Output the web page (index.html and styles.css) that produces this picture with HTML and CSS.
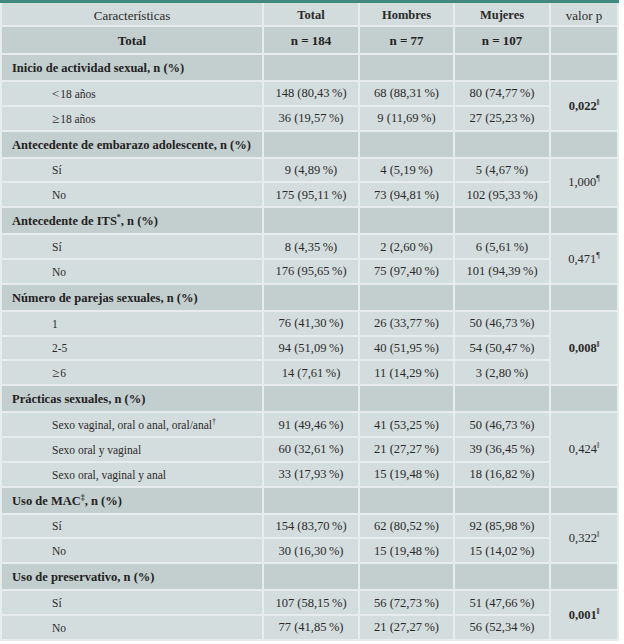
FILE: index.html
```html
<!DOCTYPE html>
<html lang="es">
<head>
<meta charset="utf-8">
<title>Tabla</title>
<link rel="stylesheet" href="styles.css">
</head>
<body>
<table class="tbl">
  <colgroup>
    <col class="c1"><col class="c2"><col class="c3"><col class="c4"><col class="c5">
  </colgroup>
  <tr class="head">
    <td class="first">Características</td>
    <td class="hb">Total</td>
    <td class="hb">Hombres</td>
    <td class="hb">Mujeres</td>
    <td>valor p</td>
  </tr>
  <tr class="sec tot">
    <td class="first ctr">Total</td>
    <td>n = 184</td>
    <td>n = 77</td>
    <td>n = 107</td>
    <td></td>
  </tr>

  <tr class="sec"><td class="first lbl">Inicio de actividad sexual, n (%)</td><td></td><td></td><td></td><td></td></tr>
  <tr class="row"><td class="first sub"><span class="lt">&lt;</span>18 años</td><td>148 (80,43&#8201;%)</td><td>68 (88,31&#8201;%)</td><td>80 (74,77&#8201;%)</td><td rowspan="2" class="pv"><b>0,022<sup>‖</sup></b></td></tr>
  <tr class="row"><td class="first sub"><span class="lt">≥</span>18 años</td><td>36 (19,57&#8201;%)</td><td>9 (11,69&#8201;%)</td><td>27 (25,23&#8201;%)</td></tr>

  <tr class="sec"><td class="first lbl">Antecedente de embarazo adolescente, n (%)</td><td></td><td></td><td></td><td></td></tr>
  <tr class="row"><td class="first sub">Sí</td><td>9 (4,89&#8201;%)</td><td>4 (5,19&#8201;%)</td><td>5 (4,67&#8201;%)</td><td rowspan="2" class="pv">1,000<sup>¶</sup></td></tr>
  <tr class="row"><td class="first sub">No</td><td>175 (95,11&#8201;%)</td><td>73 (94,81&#8201;%)</td><td>102 (95,33&#8201;%)</td></tr>

  <tr class="sec"><td class="first lbl">Antecedente de ITS<sup>*</sup>, n (%)</td><td></td><td></td><td></td><td></td></tr>
  <tr class="row"><td class="first sub">Sí</td><td>8 (4,35&#8201;%)</td><td>2 (2,60&#8201;%)</td><td>6 (5,61&#8201;%)</td><td rowspan="2" class="pv">0,471<sup>¶</sup></td></tr>
  <tr class="row"><td class="first sub">No</td><td>176 (95,65&#8201;%)</td><td>75 (97,40&#8201;%)</td><td>101 (94,39&#8201;%)</td></tr>

  <tr class="sec"><td class="first lbl">Número de parejas sexuales, n (%)</td><td></td><td></td><td></td><td></td></tr>
  <tr class="row"><td class="first sub">1</td><td>76 (41,30&#8201;%)</td><td>26 (33,77&#8201;%)</td><td>50 (46,73&#8201;%)</td><td rowspan="3" class="pv"><b>0,008<sup>‖</sup></b></td></tr>
  <tr class="row"><td class="first sub">2-5</td><td>94 (51,09&#8201;%)</td><td>40 (51,95&#8201;%)</td><td>54 (50,47&#8201;%)</td></tr>
  <tr class="row"><td class="first sub"><span class="lt">≥</span>6</td><td>14 (7,61&#8201;%)</td><td>11 (14,29&#8201;%)</td><td>3 (2,80&#8201;%)</td></tr>

  <tr class="sec"><td class="first lbl">Prácticas sexuales, n (%)</td><td></td><td></td><td></td><td></td></tr>
  <tr class="row"><td class="first sub">Sexo vaginal, oral o anal, oral/anal<sup>†</sup></td><td>91 (49,46&#8201;%)</td><td>41 (53,25&#8201;%)</td><td>50 (46,73&#8201;%)</td><td rowspan="3" class="pv">0,424<sup>‖</sup></td></tr>
  <tr class="row"><td class="first sub">Sexo oral y vaginal</td><td>60 (32,61&#8201;%)</td><td>21 (27,27&#8201;%)</td><td>39 (36,45&#8201;%)</td></tr>
  <tr class="row"><td class="first sub">Sexo oral, vaginal y anal</td><td>33 (17,93&#8201;%)</td><td>15 (19,48&#8201;%)</td><td>18 (16,82&#8201;%)</td></tr>

  <tr class="sec"><td class="first lbl">Uso de MAC<sup>‡</sup>, n (%)</td><td></td><td></td><td></td><td></td></tr>
  <tr class="row"><td class="first sub">Sí</td><td>154 (83,70&#8201;%)</td><td>62 (80,52&#8201;%)</td><td>92 (85,98&#8201;%)</td><td rowspan="2" class="pv">0,322<sup>‖</sup></td></tr>
  <tr class="row"><td class="first sub">No</td><td>30 (16,30&#8201;%)</td><td>15 (19,48&#8201;%)</td><td>15 (14,02&#8201;%)</td></tr>

  <tr class="sec"><td class="first lbl">Uso de preservativo, n (%)</td><td></td><td></td><td></td><td></td></tr>
  <tr class="row"><td class="first sub">Sí</td><td>107 (58,15&#8201;%)</td><td>56 (72,73&#8201;%)</td><td>51 (47,66&#8201;%)</td><td rowspan="2" class="pv"><b>0,001<sup>‖</sup></b></td></tr>
  <tr class="row"><td class="first sub">No</td><td>77 (41,85&#8201;%)</td><td>21 (27,27&#8201;%)</td><td>56 (52,34&#8201;%)</td></tr>
</table>
</body>
</html>
```
FILE: styles.css
```css
html, body {
  margin: 0;
  padding: 0;
  background: #ffffff;
}

.tbl {
  border-collapse: separate;
  border-spacing: 0;
  table-layout: fixed;
  width: 619px;
  border-top: 3px solid #3f897e;
  font-family: "Liberation Serif", "Times New Roman", serif;
  color: #2a2a2a;
}

.c1 { width: 264px; }
.c2 { width: 96px; }
.c3 { width: 95px; }
.c4 { width: 96px; }
.c5 { width: 68px; }

.tbl td {
  box-sizing: border-box;
  padding: 0;
  border-right: 2px solid #e7eded;
  border-bottom: 2px solid #e7eded;
  text-align: center;
  vertical-align: middle;
  white-space: nowrap;
  font-size: 12.5px;
  background: #d4dddd;
}

.tbl td.first {
  border-left: 2px solid #e7eded;
}

.head td {
  height: 24px;
  font-size: 13px;
  padding-top: 3px;
  background: #d3dcdc;
}

.head td.hb {
  font-weight: bold;
  font-size: 12.5px;
}

.sec td {
  height: 27px;
  background: #c2cfce;
  font-weight: bold;
  padding-top: 2px;
  color: #222222;
}

.tot td {
  height: 28px;
  font-size: 13px;
}

.sec td.lbl {
  text-align: left;
  padding-left: 10px;
  font-size: 12.5px;
}

.row td {
  height: 24.8px;
  padding-top: 1px;
}

.row td.sub {
  text-align: left;
  padding-left: 50px;
  font-size: 11.5px;
}

.lt {
  font-size: 13px;
  margin-right: 1px;
}

.pv {
  font-size: 12.5px;
}

sup {
  font-size: 8px;
  line-height: 0;
  vertical-align: 5px;
}
```
